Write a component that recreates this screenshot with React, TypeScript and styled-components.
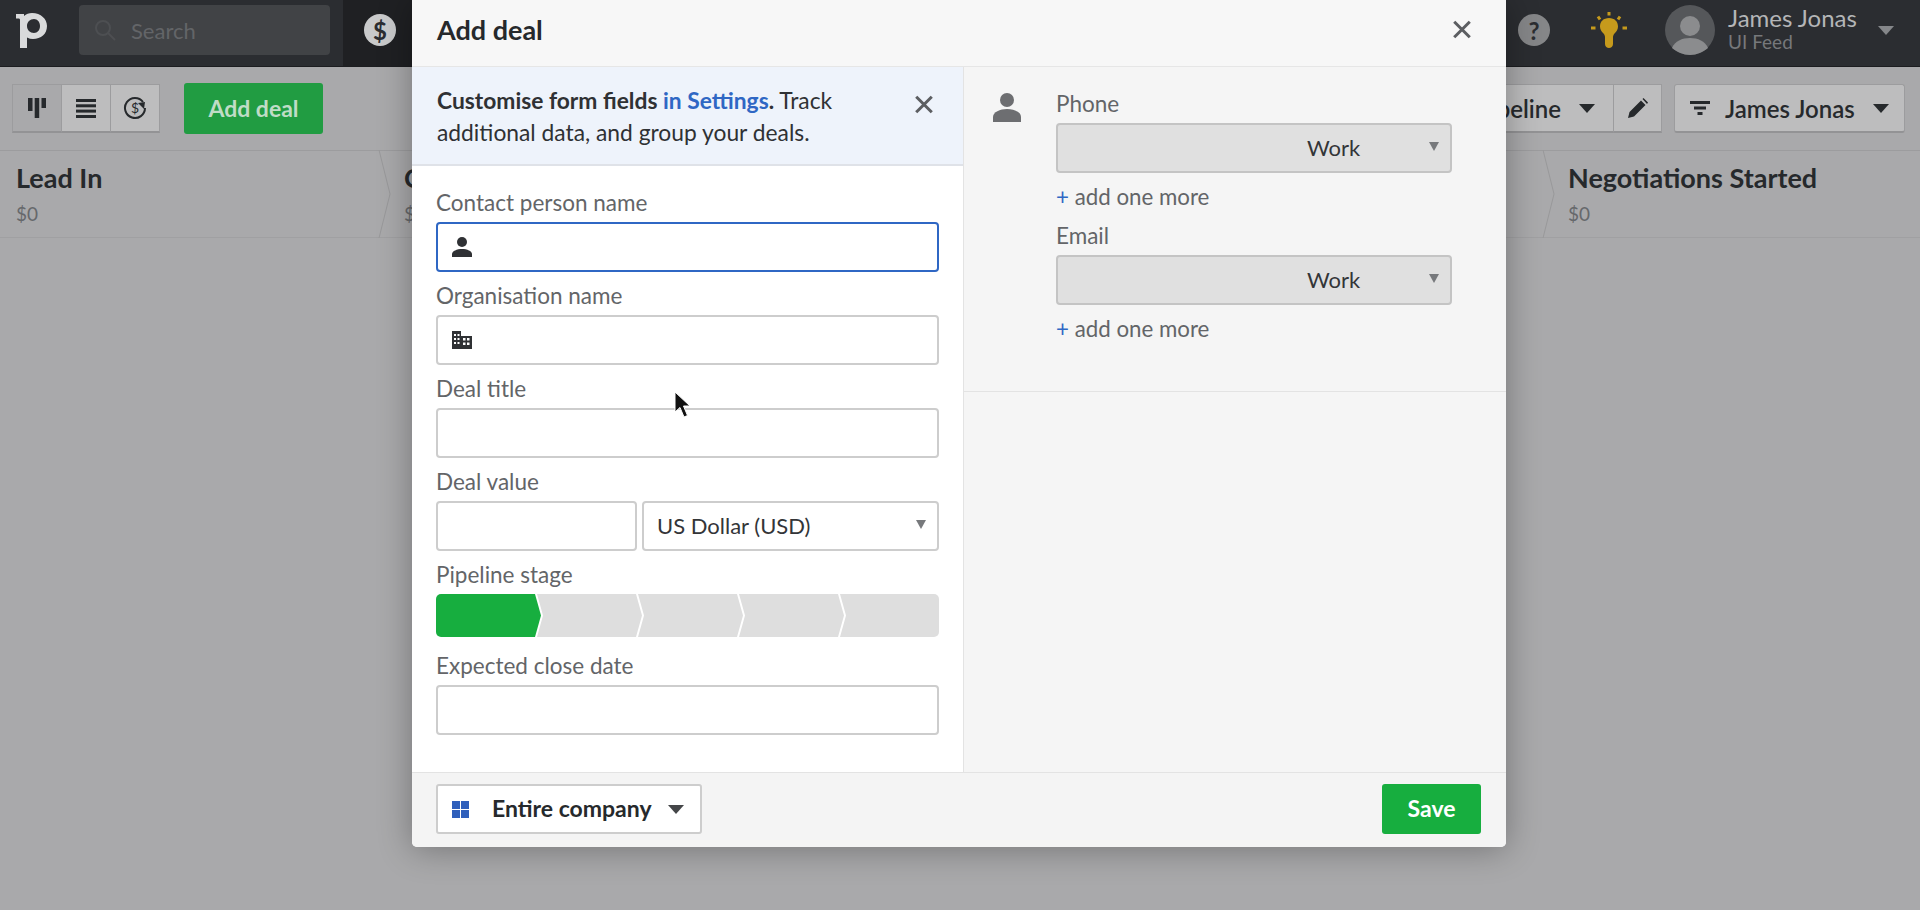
import React from 'react'
import styled, { createGlobalStyle } from 'styled-components'

const FONT = `Lato, "Noto Sans", sans-serif`

const GlobalStyle = createGlobalStyle`
  html, body {
    margin: 0;
    height: 100%;
    overflow: hidden;
    background: #a9a9ab;
    font-family: ${FONT};
  }
  * { box-sizing: border-box; }
`

const stages = ['Lead In', 'Contact Made', 'Needs Defined', 'Proposal Made', 'Negotiations Started']

function App() {
  return (
    <Page>
      <GlobalStyle />
      <TopBar>
        <Logo viewBox="0 0 31 35">
          <path
            fillRule="evenodd"
            d="M0 1H8V3C10 1 13 0 16 0C25 0 31 6 31 13C31 21 25 26 17 26C15 26 13 25.500 11 24.500V35H4V7C4 6 3.500 5.500 2.500 5.500H0ZM18 6C14 6 11 9 11 13C11 17 14 20 18 20C21.500 20 24 17 24 13C24 9 21.500 6 18 6Z"
          />
        </Logo>
        <SearchBox>
          <svg width="24" height="22" viewBox="0 0 24 22" fill="none" stroke="#4d4f52" strokeWidth="2">
            <circle cx="10" cy="9" r="7" />
            <path d="M15 14l7 7" />
          </svg>
          <SearchText>Search</SearchText>
        </SearchBox>
        <ActiveTab>
          <Badge $bg="#c9cacb">$</Badge>
        </ActiveTab>
        <TopRight>
          <Badge $bg="#858688">?</Badge>
          <BulbIcon viewBox="0 0 36 36">
            <path fill="#c69a1c" d="M18 6c-5.500 0-9 3.500-9 8.500 0 3 1.500 5 3 6.500 1 1 2 2.500 2 4v7c0 2.500 2 4 4 4s4-1.500 4-4v-7c0-1.500 1-3 2-4 1.500-1.500 3-3.500 3-6.500C27 9.500 23.500 6 18 6z" />
            <path stroke="#c69a1c" strokeWidth="3" d="M18 0v3.500M7 4.500l2 3M29 4.500l-2 3M0 16h4.500M31.500 16H36" />
          </BulbIcon>
          <Avatar viewBox="0 0 50 50">
            <circle cx="25" cy="25" r="25" fill="#55575a" />
            <circle cx="25" cy="21" r="10" fill="#8b8c8e" />
            <path fill="#8b8c8e" d="M7 43c3-7 10-10 18-10s15 3 18 10c-5 4-11 7-18 7S12 47 7 43z" />
          </Avatar>
          <UserBlock>
            <UserName>James Jonas</UserName>
            <UserCompany>UI Feed</UserCompany>
          </UserBlock>
          <Caret $color="#85878a" />
        </TopRight>
      </TopBar>

      <Toolbar>
        <ToolGroup>
          <ViewSwitch>
            <ToolButton $width={50} $active>
              <svg width="18" height="20" viewBox="0 0 18 20" fill="#26292c">
                <rect x="0" y="0" width="4.500" height="13" />
                <rect x="6.700" y="0" width="4.500" height="20" />
                <rect x="13.500" y="0" width="4.500" height="10" />
              </svg>
            </ToolButton>
            <ToolButton $width={50}>
              <svg width="20" height="19" viewBox="0 0 20 19" fill="#26292c">
                <rect y="0" width="20" height="3" />
                <rect y="5.300" width="20" height="3" />
                <rect y="10.600" width="20" height="3" />
                <rect y="16" width="20" height="3" />
              </svg>
            </ToolButton>
            <ToolButton $width={50}>
              <svg width="24" height="24" viewBox="0 0 24 24" fill="none" stroke="#26292c" strokeWidth="2">
                <path d="M20 6A10 10 0 1 0 22 12" />
                <path fill="#26292c" stroke="none" d="M15 7l7-1-1 7z" />
                <text x="12" y="17" fontSize="14" fill="#26292c" stroke="none" textAnchor="middle" fontFamily={FONT}>$</text>
              </svg>
            </ToolButton>
          </ViewSwitch>
          <AddDealButton>Add deal</AddDealButton>
        </ToolGroup>
        <ToolGroup>
          <ToolButton $width={200} $joined>
            <ToolLabel>Pipeline</ToolLabel>
            <Caret $color="#26292c" />
          </ToolButton>
          <ToolButton $width={49}>
            <svg width="20" height="20" viewBox="0 0 20 20" fill="#26292c">
              <path d="M0 20l1.500-6L13 2.500l4.500 4.500L6 18.500zM14.500 1l1-1 4.500 4.500-1 1.500z" />
            </svg>
          </ToolButton>
          <FilterButton>
            <svg width="20" height="14" viewBox="0 0 20 14" fill="#26292c">
              <rect width="20" height="3" />
              <rect x="4" y="5.500" width="12" height="3" />
              <rect x="7.500" y="11" width="5" height="3" />
            </svg>
            <ToolLabel>James Jonas</ToolLabel>
            <Caret $color="#26292c" />
          </FilterButton>
        </ToolGroup>
      </Toolbar>

      <StageRow>
        {stages.map((name, i) => (
          <Stage key={name}>
            <StageName>{name}</StageName>
            <StageValue>$0</StageValue>
            {i < stages.length - 1 && (
              <StageChevron viewBox="0 0 13 88" fill="none" stroke="#98989a" strokeWidth="1">
                <path d="M1 0l11 44L1 88" />
              </StageChevron>
            )}
          </Stage>
        ))}
      </StageRow>

      <Modal>
        <ModalHeader>
          <ModalTitle>Add deal</ModalTitle>
          <CloseIcon />
        </ModalHeader>
        <ModalBody>
          <LeftColumn>
            <Notice>
              <NoticeText>
                <NoticeStrong>Customise form fields </NoticeStrong>
                <NoticeLink>in Settings</NoticeLink>
                <NoticeStrong>.</NoticeStrong> Track additional data, and group your deals.
              </NoticeText>
              <NoticeClose />
            </Notice>
            <Form>
              <Field>
                <FieldLabel>Contact person name</FieldLabel>
                <InputWrap>
                  <PersonGlyph viewBox="0 0 20 20" fill="#2f3134">
                    <circle cx="10" cy="5" r="5" />
                    <path d="M0 20v-3c0-3 5-5 10-5s10 2 10 5v3z" />
                  </PersonGlyph>
                  <TextInput $focused />
                </InputWrap>
              </Field>
              <Field>
                <FieldLabel>Organisation name</FieldLabel>
                <InputWrap>
                  <PersonGlyph viewBox="0 0 20 18" fill="#2f3134">
                    <path fillRule="evenodd" d="M0 0h9v5h11v13H0zM2 3v2h2V3zM5.500 3v2h2V3zM2 7v2h2V7zM5.500 7v2h2V7zM2 11v2h2v-2zM5.500 11v2h2v-2zM11 7v2.500h2.500V7zM15 7v2.500h2.500V7zM11 11.500V14h2.500v-2.500zM15 11.500V14h2.500v-2.500z" />
                  </PersonGlyph>
                  <TextInput />
                </InputWrap>
              </Field>
              <Field>
                <FieldLabel>Deal title</FieldLabel>
                <TextInput />
              </Field>
              <Field>
                <FieldLabel>Deal value</FieldLabel>
                <ValueRow>
                  <TextInput />
                  <SelectBox>
                    <SelectText>US Dollar (USD)</SelectText>
                    <SelectArrow />
                  </SelectBox>
                </ValueRow>
              </Field>
              <Field>
                <FieldLabel>Pipeline stage</FieldLabel>
                <StageBar>
                  {stages.map((name, i) => (
                    <StageStep key={name} $active={i === 0} />
                  ))}
                </StageBar>
              </Field>
              <Field>
                <FieldLabel>Expected close date</FieldLabel>
                <TextInput />
              </Field>
            </Form>
          </LeftColumn>
          <RightColumn>
            <ContactBlock>
              <PersonIcon viewBox="0 0 28 29" fill="#6d6e71">
                <circle cx="14" cy="7" r="7" />
                <path d="M0 29v-5c0-5 7-8 14-8s14 3 14 8v5z" />
              </PersonIcon>
              <ContactFields>
                {['Phone', 'Email'].map(kind => (
                  <Field key={kind}>
                    <FieldLabel>{kind}</FieldLabel>
                    <SelectBox $disabled>
                      <SelectText>Work</SelectText>
                      <SelectArrow />
                    </SelectBox>
                    <AddMore><Plus>+</Plus> add one more</AddMore>
                  </Field>
                ))}
              </ContactFields>
            </ContactBlock>
          </RightColumn>
        </ModalBody>
        <ModalFooter>
          <VisibilityButton>
            <svg width="17" height="17" viewBox="0 0 17 17" fill="#2f5fbb">
              <rect width="8" height="8" />
              <rect x="9" width="8" height="8" />
              <rect y="9" width="8" height="8" />
              <rect x="9" y="9" width="8" height="8" />
            </svg>
            <VisibilityLabel>Entire company</VisibilityLabel>
            <Caret $color="#444648" />
          </VisibilityButton>
          <SaveButton>Save</SaveButton>
        </ModalFooter>
      </Modal>

      <Pointer viewBox="0 0 18 28">
        <path d="M1 1v20l5-4.500 4 9.500 3.500-1.500-4-9.500H16z" fill="#111" stroke="#fff" strokeWidth="1" />
      </Pointer>
    </Page>
  )
}

export default App

const Page = styled.div`
  position: relative;
  width: 1920px;
  height: 910px;
  overflow: hidden;
  background: #a9a9ab;
`;

const TopBar = styled.header`
  display: flex;
  align-items: center;
  height: 67px;
  padding: 0 0 6px 16px;
  background: #2b2d31;
  border-bottom: 1px solid #1c1d20;
`;

const Logo = styled.svg`
  width: 31px;
  height: 35px;
  margin-right: 32px;
  fill: #d9dadb;
`;

const SearchBox = styled.div`
  display: flex;
  align-items: center;
  gap: 14px;
  width: 251px;
  height: 50px;
  padding-left: 14px;
  margin-right: 13px;
  background: #414346;
  border-radius: 4px;
`;

const SearchText = styled.span`
  font-size: 22px;
  color: #636568;
`;

const ActiveTab = styled.div`
  display: flex;
  align-items: center;
  justify-content: center;
  width: 74px;
  height: 66px;
  margin-bottom: -6px;
  padding-bottom: 6px;
  background: #1f2023;
`;

const Badge = styled.span<{ $bg: string }>`
  display: flex;
  align-items: center;
  justify-content: center;
  width: 32px;
  height: 32px;
  border-radius: 50%;
  background: ${p => p.$bg};
  color: #2b2d31;
  font-size: 24px;
  font-weight: 700;
`;

const TopRight = styled.div`
  display: flex;
  align-items: center;
  margin-left: auto;
  padding-right: 26px;
`;

const BulbIcon = styled.svg`
  width: 36px;
  height: 36px;
  margin: 0 38px 0 41px;
`;

const Avatar = styled.svg`
  width: 50px;
  height: 50px;
`;

const UserBlock = styled.div`
  display: flex;
  flex-direction: column;
  width: 150px;
  margin-left: 13px;
  padding-bottom: 4px;
`;

const UserName = styled.span`
  font-size: 24px;
  line-height: 27px;
  color: #b4b5b7;
`;

const UserCompany = styled.span`
  font-size: 19px;
  line-height: 21px;
  color: #76787b;
`;

const Caret = styled.span<{ $color: string }>`
  flex: none;
  width: 0;
  height: 0;
  border-left: 8px solid transparent;
  border-right: 8px solid transparent;
  border-top: 9px solid ${p => p.$color};
`;

const Toolbar = styled.div`
  display: flex;
  align-items: center;
  justify-content: space-between;
  height: 83px;
  padding: 0 15px 0 13px;
`;

const ToolGroup = styled.div`
  display: flex;
  align-items: center;
`;

const ViewSwitch = styled.div`
  display: flex;
  margin-right: 24px;
`;

const ToolButton = styled.div<{ $width: number; $active?: boolean; $joined?: boolean }>`
  display: flex;
  align-items: center;
  justify-content: ${p => (p.$joined ? 'flex-end' : 'center')};
  gap: 18px;
  width: ${p => p.$width}px;
  height: 49px;
  padding-right: ${p => (p.$joined ? '18px' : '0')};
  background: ${p => (p.$active ? '#a9a9ab' : '#bdbdbe')};
  border: 1px solid #9c9c9e;
  border-bottom: 2px solid #939395;
  margin-left: -1px;
`;

const FilterButton = styled(ToolButton).attrs({ $width: 231 })`
  justify-content: flex-start;
  gap: 15px;
  padding: 0 15px 0 15px;
  margin-left: 12px;
  border-radius: 3px;
  ${Caret} {
    margin-left: auto;
  }
`;

const ToolLabel = styled.span`
  font-size: 24px;
  font-weight: 600;
  color: #26292c;
  white-space: nowrap;
`;

const AddDealButton = styled.div`
  display: flex;
  align-items: center;
  justify-content: center;
  width: 139px;
  height: 51px;
  padding-bottom: 2px;
  background: #219c42;
  border-radius: 3px;
  font-size: 23px;
  font-weight: 700;
  color: #bfdcc6;
`;

const StageRow = styled.div`
  display: grid;
  grid-template-columns: repeat(4, 388px) 1fr;
  height: 88px;
  border-top: 1px solid #9c9c9e;
  border-bottom: 1px solid #a0a0a2;
`;

const Stage = styled.div`
  position: relative;
  padding: 8px 0 0 16px;
`;

const StageName = styled.div`
  font-size: 27px;
  font-weight: 700;
  line-height: 38px;
  color: #26292c;
  white-space: nowrap;
`;

const StageValue = styled.div`
  margin-top: 4px;
  font-size: 19px;
  line-height: 26px;
  color: #66686b;
`;

const StageChevron = styled.svg`
  position: absolute;
  top: -1px;
  right: -3px;
  width: 13px;
  height: 88px;
`;

const Modal = styled.section`
  position: absolute;
  top: 0;
  left: 412px;
  display: flex;
  flex-direction: column;
  width: 1094px;
  height: 847px;
  background: #f5f5f5;
  border-radius: 0 0 5px 5px;
  box-shadow: 0 2px 34px rgba(0, 0, 0, 0.32);
`;

const ModalHeader = styled.div`
  display: flex;
  align-items: center;
  justify-content: space-between;
  height: 67px;
  padding: 0 35px 8px 25px;
  background: #f7f7f7;
  border-bottom: 1px solid #e6e6e6;
`;

const ModalTitle = styled.h1`
  margin: 0;
  font-size: 27px;
  font-weight: 700;
  color: #26292c;
`;

const CloseIcon = styled.span`
  position: relative;
  flex: none;
  width: 18px;
  height: 18px;
  &::before,
  &::after {
    content: '';
    position: absolute;
    top: 50%;
    left: -2px;
    right: -2px;
    height: 3px;
    margin-top: -1.5px;
    background: #5c5e61;
  }
  &::before { transform: rotate(45deg); }
  &::after { transform: rotate(-45deg); }
`;

const NoticeClose = styled(CloseIcon)`
  margin-top: 11px;
`;

const ModalBody = styled.div`
  display: flex;
  flex: 1;
  min-height: 0;
`;

const LeftColumn = styled.div`
  display: flex;
  flex-direction: column;
  width: 552px;
  background: #fff;
  border-right: 1px solid #e3e3e3;
`;

const Notice = styled.div`
  display: flex;
  align-items: flex-start;
  justify-content: space-between;
  height: 99px;
  padding: 17px 30px 0 25px;
  background: #eef3fb;
  border-bottom: 2px solid #dfe2e8;
`;

const NoticeText = styled.p`
  margin: 0;
  width: 440px;
  font-size: 22.8px;
  line-height: 32px;
  color: #2f3134;
`;

const NoticeStrong = styled.span`
  font-weight: 700;
`;

const NoticeLink = styled.span`
  font-weight: 700;
  color: #2f67c4;
`;

const Form = styled.div`
  display: flex;
  flex-direction: column;
  gap: 9px;
  padding: 22px 24px 0;
`;

const Field = styled.div`
  display: flex;
  flex-direction: column;
`;

const FieldLabel = styled.label`
  height: 30px;
  margin-bottom: 4px;
  font-size: 22.5px;
  line-height: 29px;
  color: #636568;
`;

const InputWrap = styled.div`
  position: relative;
  display: flex;
`;

const PersonGlyph = styled.svg`
  position: absolute;
  top: 50%;
  left: 16px;
  width: 20px;
  height: 20px;
  margin-top: -10px;
`;

const TextInput = styled.input<{ $focused?: boolean }>`
  width: 100%;
  height: 50px;
  background: #fff;
  border: ${p => (p.$focused ? '2px solid #2f67c4' : '2px solid #cdcdcd')};
  border-radius: 4px;
  outline: none;
`;

const ValueRow = styled.div`
  display: grid;
  grid-template-columns: 201px 1fr;
  gap: 5px;
`;

const SelectBox = styled.div<{ $disabled?: boolean }>`
  position: relative;
  display: flex;
  align-items: center;
  height: 50px;
  padding-left: ${p => (p.$disabled ? '249px' : '13px')};
  padding-bottom: 2px;
  background: ${p => (p.$disabled ? '#e0e0e0' : '#fff')};
  border: 2px solid ${p => (p.$disabled ? '#c4c4c4' : '#cdcdcd')};
  border-radius: 4px;
`;

const SelectText = styled.span`
  font-size: 22px;
  color: #333538;
`;

const SelectArrow = styled.span`
  position: absolute;
  top: 17px;
  right: 11px;
  width: 0;
  height: 0;
  border-left: 5px solid transparent;
  border-right: 5px solid transparent;
  border-top: 9px solid #77797c;
`;

const StageBar = styled.div`
  display: flex;
  height: 43px;
  margin-bottom: 5px;
  background: #fff;
  border-radius: 5px;
  overflow: hidden;
`;

const StageStep = styled.div<{ $active: boolean }>`
  flex: 0 0 105px;
  margin-left: -4px;
  background: ${p => (p.$active ? '#17ae3f' : '#dedede')};
  clip-path: polygon(0 0, calc(100% - 6px) 0, 100% 50%, calc(100% - 6px) 100%, 0 100%, 6px 50%);
  &:first-child {
    margin-left: 0;
    clip-path: polygon(0 0, calc(100% - 6px) 0, 100% 50%, calc(100% - 6px) 100%, 0 100%);
  }
  &:last-child {
    clip-path: polygon(0 0, 100% 0, 100% 100%, 0 100%, 6px 50%);
  }
`;

const RightColumn = styled.div`
  flex: 1;
  background: #f5f5f5;
`;

const ContactBlock = styled.div`
  display: flex;
  align-items: flex-start;
  gap: 35px;
  height: 325px;
  padding: 26px 54px 0 29px;
  border-bottom: 1px solid #e3e3e3;
`;

const PersonIcon = styled.svg`
  flex: none;
  width: 28px;
  height: 29px;
`;

const ContactFields = styled.div`
  display: flex;
  flex-direction: column;
  flex: 1;
  gap: 9px;
  margin-top: -4px;
`;

const AddMore = styled.div`
  height: 30px;
  margin-top: 9px;
  font-size: 22.3px;
  line-height: 29px;
  color: #636568;
`;

const Plus = styled.span`
  color: #2f67c4;
`;

const ModalFooter = styled.div`
  display: flex;
  align-items: flex-start;
  justify-content: space-between;
  height: 75px;
  padding: 11px 25px 0 24px;
  background: #f4f4f4;
  border-top: 1px solid #e3e3e3;
  border-radius: 0 0 5px 5px;
`;

const VisibilityButton = styled.div`
  display: flex;
  align-items: center;
  width: 266px;
  height: 50px;
  padding: 0 16px 0 14px;
  background: #fff;
  border: 2px solid #cdcdcd;
  border-radius: 3px;
`;

const VisibilityLabel = styled.span`
  flex: 1;
  margin-left: 23px;
  padding-bottom: 2px;
  font-size: 23px;
  font-weight: 700;
  color: #26292c;
  white-space: nowrap;
`;

const SaveButton = styled.div`
  display: flex;
  align-items: center;
  justify-content: center;
  width: 99px;
  height: 50px;
  padding-bottom: 2px;
  background: #17ae3f;
  border-radius: 3px;
  font-size: 23px;
  font-weight: 700;
  color: #fff;
`;

const Pointer = styled.svg`
  position: absolute;
  top: 391px;
  left: 674px;
  width: 18px;
  height: 28px;
`;
